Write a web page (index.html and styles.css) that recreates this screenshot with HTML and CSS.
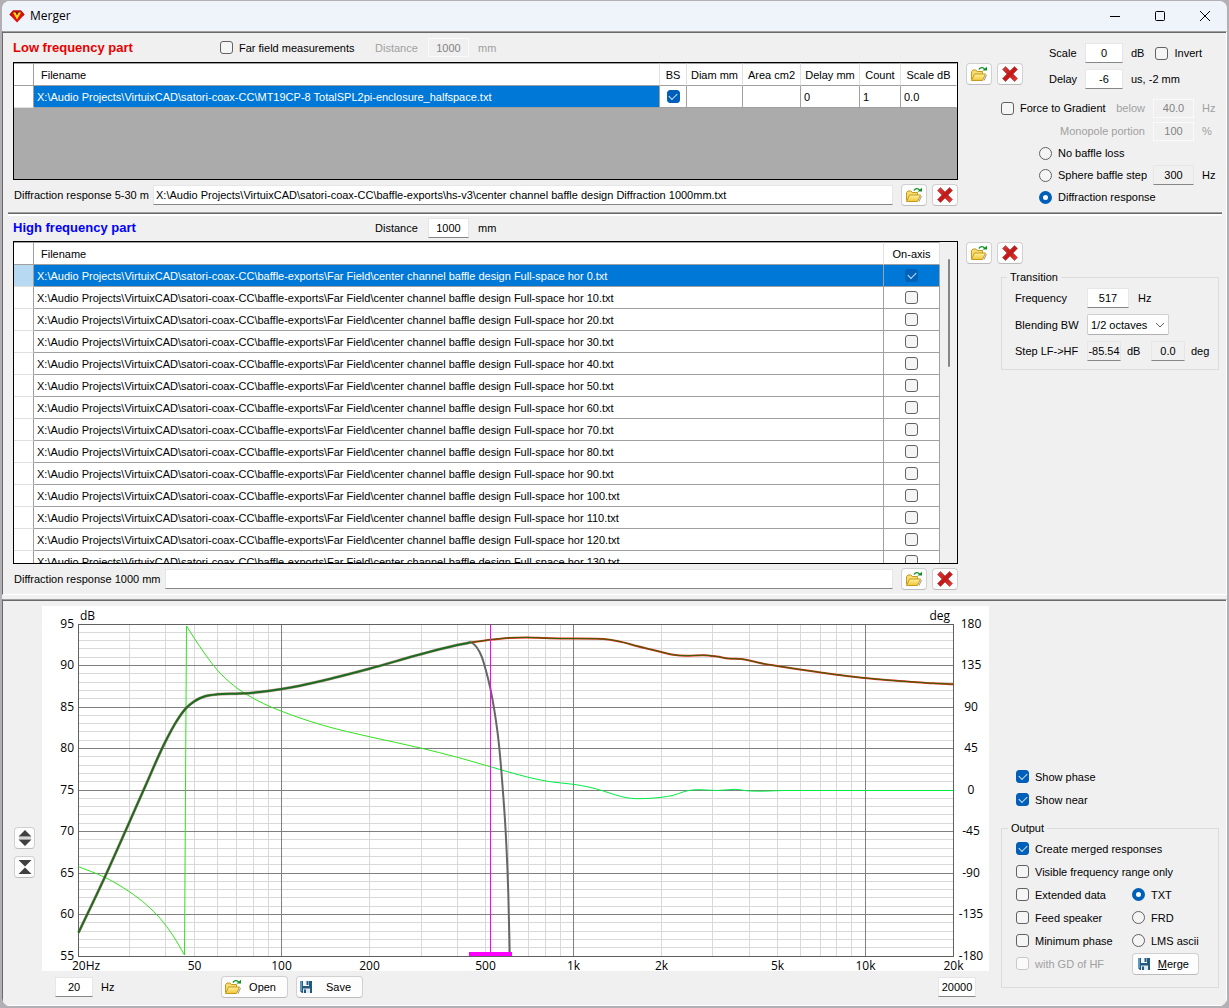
FILE: index.html
```html
<!DOCTYPE html>
<html lang="en">
<head>
<meta charset="utf-8">
<title>Merger</title>
<link rel="stylesheet" href="styles.css">
</head>
<body>
<svg width="0" height="0" class="defs" aria-hidden="true">
  <defs>
    <linearGradient id="gold" x1="0" y1="0" x2="0" y2="1"><stop offset="0" stop-color="#fff3a0"/><stop offset="1" stop-color="#f0c436"/></linearGradient>
    <linearGradient id="crimson" x1="0" y1="0" x2="1" y2="1"><stop offset="0" stop-color="#d8463e"/><stop offset=".5" stop-color="#c01818"/><stop offset="1" stop-color="#ec4038"/></linearGradient>
  </defs>
  <symbol id="i-folder" viewBox="0 0 18 16">
    <path d="M1.500 13.500V5.500L3 4h3l1.200 1.500H12.500V8" fill="#f6dc70" stroke="#c79a1c"/>
    <path d="M1.500 14.500L4.500 8H15.500L12.500 14.500Z" fill="url(#gold)" stroke="#c79a1c" stroke-linejoin="round"/>
    <path d="M14 14.500L16.500 9" stroke="#9a9a9a" fill="none"/>
    <path d="M9 3.500C10 1.300 13 1 14.500 3" fill="none" stroke="#0d9020" stroke-width="1.400"/>
    <path d="M12.500 4.500H17V.8Z" fill="#0d9020"/>
  </symbol>
  <symbol id="i-delete" viewBox="0 0 16 16">
    <path d="M3.500.5L8 5 12.500.5 15.500 3.500 11 8 15.500 12.500 12.500 15.500 8 11 3.500 15.500.5 12.500 5 8 .5 3.500Z" fill="url(#crimson)" stroke="#b03030" stroke-width=".6" stroke-linejoin="round"/>
  </symbol>
  <symbol id="i-save" viewBox="0 0 14 14">
    <path d="M1 1H13V13H3L1 11Z" fill="#24587c"/>
    <path d="M1 1H3V11H1Z" fill="#5f98bd"/>
    <path d="M4 1H10V6H4Z" fill="#f4f8fb"/>
    <path d="M7.500 1H9.500V5H7.500Z" fill="#24587c"/>
    <path d="M4 8.500H11V13H4Z" fill="#dfe9f0"/>
    <path d="M5 9.500H7V13H5Z" fill="#24587c"/>
  </symbol>
</svg>

<div class="window">
  <header class="titlebar">
    <svg class="gem" viewBox="0 0 16 13" width="16" height="13" aria-hidden="true">
      <path d="M4 .5H12L15.500 4.500 8 12.500.5 4.500Z" fill="#e01008"/>
      <path d="M4 .5H12L15.500 4.500 14 6 11.500 2.500H4.500L2 6 .5 4.500Z" fill="#b8150c"/>
      <path d="M4 2.500H6.500L8 5.500 9.500 2.500H12L8 9.500Z" fill="#ffe21a"/>
      <path d="M6.500 2H9.500L8 5Z" fill="#7c1208"/>
    </svg>
    <h1>Merger</h1>
    <div class="caption">
      <button aria-label="Minimize"><svg viewBox="0 0 12 12"><path d="M1 6.500H11"/></svg></button>
      <button aria-label="Maximize"><svg viewBox="0 0 12 12"><rect x="1.500" y="1.500" width="9" height="9" rx="1"/></svg></button>
      <button aria-label="Close"><svg viewBox="0 0 12 12"><path d="M1 1L11 11M11 1L1 11"/></svg></button>
    </div>
  </header>

  <main class="panel sources">
    <section class="part part-low">
      <div class="files">
        <div class="part-head">
          <h2 class="low">Low frequency part</h2>
          <label class="opt"><input type="checkbox">Far field measurements</label>
          <div class="distance off"><label for="dist-lf">Distance</label><input class="num" id="dist-lf" value="1000" disabled><span>mm</span></div>
        </div>
        <div class="grid-box">
          <table class="grid grid-lf">
            <colgroup><col class="c-row"><col><col class="c-bs"><col class="c-diam"><col class="c-area"><col class="c-delay"><col class="c-count"><col class="c-scale"></colgroup>
            <thead><tr><th></th><th class="name">Filename</th><th>BS</th><th>Diam mm</th><th>Area cm2</th><th>Delay mm</th><th>Count</th><th>Scale dB</th></tr></thead>
            <tbody><tr><td></td><td class="sel">X:\Audio Projects\VirtuixCAD\satori-coax-CC\MT19CP-8 TotalSPL2pi-enclosure_halfspace.txt</td><td class="tick"><input type="checkbox" aria-label="BS" checked></td><td></td><td></td><td>0</td><td>1</td><td>0.0</td></tr></tbody>
          </table>
        </div>
        <div class="path-row">
          <label class="path-lf" for="diff-lf">Diffraction response 5-30 m</label>
          <input class="path" id="diff-lf" value="X:\Audio Projects\VirtuixCAD\satori-coax-CC\baffle-exports\hs-v3\center channel baffle design Diffraction 1000mm.txt">
          <div class="file-buttons">
            <button class="btn icon" aria-label="Open"><svg width="18" height="16"><use href="#i-folder"/></svg></button>
            <button class="btn icon" aria-label="Remove"><svg width="16" height="16"><use href="#i-delete"/></svg></button>
          </div>
        </div>
      </div>
      <div class="settings">
        <div class="adjust">
          <div class="file-buttons">
            <button class="btn icon" aria-label="Open"><svg width="18" height="16"><use href="#i-folder"/></svg></button>
            <button class="btn icon" aria-label="Remove"><svg width="16" height="16"><use href="#i-delete"/></svg></button>
          </div>
          <div class="scale-grid">
            <label for="scale">Scale</label><input class="num" id="scale" value="0"><div class="unit">dB <label class="opt"><input type="checkbox">Invert</label></div>
            <label for="delay">Delay</label><input class="num" id="delay" value="-6"><div class="unit">us, -2 mm</div>
          </div>
        </div>
        <div class="loss-grid">
          <div class="gradient"><label class="opt"><input type="checkbox">Force to Gradient</label><label class="off" for="below">below</label></div>
          <input class="num" id="below" value="40.0" disabled><span class="off">Hz</span>
          <label class="off end" for="mono">Monopole portion</label><input class="num" id="mono" value="100" disabled><span class="off">%</span>
          <label class="opt loss"><input type="radio" name="loss">No baffle loss</label>
          <label class="opt step"><input type="radio" name="loss">Sphere baffle step</label><input class="num ro" aria-label="Sphere baffle step frequency" value="300"><span>Hz</span>
          <label class="opt loss"><input type="radio" name="loss" checked>Diffraction response</label>
        </div>
      </div>
    </section>

    <hr class="rule">

    <section class="part part-high">
      <div class="files">
        <div class="part-head">
          <h2 class="high">High frequency part</h2>
          <div class="distance"><label for="dist-hf">Distance</label><input class="num" id="dist-hf" value="1000"><span>mm</span></div>
        </div>
        <div class="grid-box tall">
          <table class="grid grid-hf">
            <colgroup><col class="c-row"><col><col class="c-axis"></colgroup>
            <thead><tr><th></th><th class="name">Filename</th><th>On-axis</th></tr></thead>
            <tbody>
              <tr class="current"><td></td><td>X:\Audio Projects\VirtuixCAD\satori-coax-CC\baffle-exports\Far Field\center channel baffle design Full-space hor 0.txt</td><td class="tick"><input type="checkbox" aria-label="On-axis" checked></td></tr>
              <tr><td></td><td>X:\Audio Projects\VirtuixCAD\satori-coax-CC\baffle-exports\Far Field\center channel baffle design Full-space hor 10.txt</td><td class="tick"><input type="checkbox" aria-label="On-axis"></td></tr>
              <tr><td></td><td>X:\Audio Projects\VirtuixCAD\satori-coax-CC\baffle-exports\Far Field\center channel baffle design Full-space hor 20.txt</td><td class="tick"><input type="checkbox" aria-label="On-axis"></td></tr>
              <tr><td></td><td>X:\Audio Projects\VirtuixCAD\satori-coax-CC\baffle-exports\Far Field\center channel baffle design Full-space hor 30.txt</td><td class="tick"><input type="checkbox" aria-label="On-axis"></td></tr>
              <tr><td></td><td>X:\Audio Projects\VirtuixCAD\satori-coax-CC\baffle-exports\Far Field\center channel baffle design Full-space hor 40.txt</td><td class="tick"><input type="checkbox" aria-label="On-axis"></td></tr>
              <tr><td></td><td>X:\Audio Projects\VirtuixCAD\satori-coax-CC\baffle-exports\Far Field\center channel baffle design Full-space hor 50.txt</td><td class="tick"><input type="checkbox" aria-label="On-axis"></td></tr>
              <tr><td></td><td>X:\Audio Projects\VirtuixCAD\satori-coax-CC\baffle-exports\Far Field\center channel baffle design Full-space hor 60.txt</td><td class="tick"><input type="checkbox" aria-label="On-axis"></td></tr>
              <tr><td></td><td>X:\Audio Projects\VirtuixCAD\satori-coax-CC\baffle-exports\Far Field\center channel baffle design Full-space hor 70.txt</td><td class="tick"><input type="checkbox" aria-label="On-axis"></td></tr>
              <tr><td></td><td>X:\Audio Projects\VirtuixCAD\satori-coax-CC\baffle-exports\Far Field\center channel baffle design Full-space hor 80.txt</td><td class="tick"><input type="checkbox" aria-label="On-axis"></td></tr>
              <tr><td></td><td>X:\Audio Projects\VirtuixCAD\satori-coax-CC\baffle-exports\Far Field\center channel baffle design Full-space hor 90.txt</td><td class="tick"><input type="checkbox" aria-label="On-axis"></td></tr>
              <tr><td></td><td>X:\Audio Projects\VirtuixCAD\satori-coax-CC\baffle-exports\Far Field\center channel baffle design Full-space hor 100.txt</td><td class="tick"><input type="checkbox" aria-label="On-axis"></td></tr>
              <tr><td></td><td>X:\Audio Projects\VirtuixCAD\satori-coax-CC\baffle-exports\Far Field\center channel baffle design Full-space hor 110.txt</td><td class="tick"><input type="checkbox" aria-label="On-axis"></td></tr>
              <tr><td></td><td>X:\Audio Projects\VirtuixCAD\satori-coax-CC\baffle-exports\Far Field\center channel baffle design Full-space hor 120.txt</td><td class="tick"><input type="checkbox" aria-label="On-axis"></td></tr>
              <tr><td></td><td>X:\Audio Projects\VirtuixCAD\satori-coax-CC\baffle-exports\Far Field\center channel baffle design Full-space hor 130.txt</td><td class="tick"><input type="checkbox" aria-label="On-axis"></td></tr>
            </tbody>
          </table>
          <div class="scrollbar"><div class="thumb"></div></div>
        </div>
        <div class="path-row">
          <label class="path-hf" for="diff-hf">Diffraction response 1000 mm</label>
          <input class="path" id="diff-hf" value="">
          <div class="file-buttons">
            <button class="btn icon" aria-label="Open"><svg width="18" height="16"><use href="#i-folder"/></svg></button>
            <button class="btn icon" aria-label="Remove"><svg width="16" height="16"><use href="#i-delete"/></svg></button>
          </div>
        </div>
      </div>
      <div class="settings">
        <div class="file-buttons hf-buttons">
          <button class="btn icon" aria-label="Open"><svg width="18" height="16"><use href="#i-folder"/></svg></button>
          <button class="btn icon" aria-label="Remove"><svg width="16" height="16"><use href="#i-delete"/></svg></button>
        </div>
        <fieldset class="transition">
          <legend>Transition</legend>
          <div class="row"><label for="freq">Frequency</label><input class="num wide" id="freq" value="517"><span>Hz</span></div>
          <div class="row"><label for="bw">Blending BW</label>
            <div class="combo"><select id="bw"><option>1/2 octaves</option><option>1 octave</option></select><svg viewBox="0 0 10 6" width="10" height="6" aria-hidden="true"><path d="M1 1L5 5 9 1"/></svg></div></div>
          <div class="row"><label for="step-db">Step LF-&gt;HF</label><input class="num ro tight" id="step-db" value="-85.54"><span class="db">dB</span><input class="num ro tight" aria-label="Phase step" value="0.0"><span>deg</span></div>
        </fieldset>
      </div>
    </section>
  </main>

  <section class="panel result">
    <div class="zoomers">
      <button class="btn square" aria-label="Expand range"><svg viewBox="0 0 14 16" width="14" height="16"><path d="M7 0L13.500 6.500H.5ZM.5 9.500H13.500L7 16Z"/><path class="faint" d="M1 8H13"/></svg></button>
      <button class="btn square" aria-label="Compress range"><svg viewBox="0 0 14 16" width="14" height="16"><path d="M.5 1H13.500L7 7.500ZM7 8.500L13.500 15H.5Z"/></svg></button>
    </div>
    <div class="plot">
      <svg id="chart" viewBox="0 0 947 365" role="img" aria-label="Frequency response"></svg>
      <div class="plot-tools">
        <div class="low-limit"><input class="num" id="fmin" value="20"><label for="fmin">Hz</label></div>
        <button class="btn"><svg width="18" height="16"><use href="#i-folder"/></svg><span>Open</span></button>
        <button class="btn"><svg width="14" height="14"><use href="#i-save"/></svg><span>Save</span></button>
        <input class="num high-limit" aria-label="Upper frequency" value="20000">
      </div>
    </div>
    <div class="output-side">
      <label class="opt"><input type="checkbox" checked>Show phase</label>
      <label class="opt"><input type="checkbox" checked>Show near</label>
      <fieldset class="output">
        <legend>Output</legend>
        <label class="opt span"><input type="checkbox" checked>Create merged responses</label>
        <label class="opt span"><input type="checkbox">Visible frequency range only</label>
        <label class="opt"><input type="checkbox">Extended data</label><label class="opt"><input type="radio" name="fmt" checked>TXT</label>
        <label class="opt"><input type="checkbox">Feed speaker</label><label class="opt"><input type="radio" name="fmt">FRD</label>
        <label class="opt"><input type="checkbox">Minimum phase</label><label class="opt"><input type="radio" name="fmt">LMS ascii</label>
        <label class="opt off"><input type="checkbox" disabled>with GD of HF</label><button class="btn merge"><svg width="14" height="14"><use href="#i-save"/></svg><span><u>M</u>erge</span></button>
      </fieldset>
    </div>
  </section>
</div>
<script src="chart.js"></script>
</body>
</html>
```
FILE: styles.css
```css
* { box-sizing: border-box; }
body {
  margin: 0;
  padding: 1px 2px 2px;
  min-height: 100vh;
  display: flex;
  background: #b2b0b4;
  color: #000;
  font: 11px/14px "Liberation Sans", Arial, sans-serif;
}
input, select, button { font: inherit; color: inherit; margin: 0; }
label, span { white-space: nowrap; }
.defs { position: absolute; }

.window {
  flex: 1;
  min-width: 0;
  display: flex;
  flex-direction: column;
  background: #f0f0f0;
  border-radius: 8px;
  overflow: hidden;
}

/* Title bar */
.titlebar {
  height: 30px;
  flex: none;
  display: flex;
  align-items: center;
  gap: 5px;
  padding-left: 7px;
  background: #eff3fa;
}
.titlebar h1 { margin: 0; font: 12px/16px "Open Sans", "Segoe UI", sans-serif; }
.caption { margin-left: auto; display: flex; }
.caption button {
  width: 45px; height: 30px; padding: 0; border: 0; background: none;
  display: flex; align-items: center; justify-content: center;
}
.caption svg { width: 12px; height: 12px; fill: none; stroke: #000; }

/* Sunken panels */
.panel {
  border: 1px solid;
  border-color: #a0a0a0 #fff #fff #696969;
  box-shadow: inset 0 1px #696969;
}
.sources { padding: 1px 4px 4px 10px; margin-bottom: 4px; }
.part { display: grid; grid-template-columns: minmax(0, 1fr) 256px; column-gap: 8px; }
.part-low { padding-bottom: 4px; }
.rule {
  margin: 0 0 0 -5px;
  height: 4px;
  border: solid;
  border-width: 1px 0 2px;
  border-color: #a0a0a0 transparent #fff;
  background: #696969;
}

.part-head { display: grid; grid-template-columns: 207px 155px auto; align-items: center; height: 29px; }
.part-high .part-head { height: 25px; padding-bottom: 2px; }
.part-head h2 { margin: 0; font-size: 13px; line-height: 16px; font-weight: bold; }
h2.low { color: #e80000; }
h2.high { color: #00f; }
.distance { grid-column: 3; display: flex; align-items: center; }
.distance label { width: 53px; }
.distance .num { width: 41px; margin-right: 9px; }
.off { color: #a0a0a0; }

/* Controls */
.opt { display: flex; align-items: center; gap: 6px; }
input[type="checkbox"], input[type="radio"] {
  appearance: none;
  flex: none;
  width: 13px;
  height: 13px;
  border: 1px solid #626262;
  border-radius: 3px;
  background: #f5f5f5;
}
input[type="radio"] { border-radius: 50%; }
input[type="checkbox"]:checked { border-color: #005fb8; background: #005fb8; display: grid; place-items: center; }
input[type="checkbox"]:checked::before {
  content: "";
  width: 7px;
  height: 4px;
  margin-bottom: 2px;
  border: solid #cfe3f5;
  border-width: 0 0 1px 1px;
  transform: rotate(-45deg);
}
input[type="radio"]:checked { border: 4px solid #005fb8; background: #fff; }
input:disabled[type="checkbox"] { border-color: #c8c8c8; background: #fafafa; }

.num, .path {
  height: 20px;
  padding: 0 2px;
  border: 1px solid #e6e6e6;
  border-bottom-color: #868686;
  border-radius: 0;
  background: #fff;
}
.num { width: 38px; text-align: center; }
.num.ro { background: #f0f0f0; }
.num:disabled { height: 19px; border-color: #fafafa; background: #f0f0f0; color: #838383; }
.btn {
  height: 22px;
  padding: 0;
  display: flex;
  align-items: center;
  justify-content: center;
  border: 1px solid #d0d0d0;
  border-bottom-color: #bcbcbc;
  border-radius: 4px;
  background: #fdfdfd;
}
.btn.icon { width: 26px; }
.btn.square { width: 21px; }
.file-buttons { display: flex; gap: 5px; }

/* File grids */
.grid-box { height: 118px; border: 1px solid #000; background: #ababab; display: flex; align-items: flex-start; overflow: hidden; }
.grid-box.tall { height: 323px; background: #fff; }
.grid { flex: 1; min-width: 0; width: 100%; table-layout: fixed; border-collapse: separate; border-spacing: 0; background: #fff; }
.grid th, .grid td {
  height: 22px;
  padding: 0 3px;
  border: solid #a0a0a0;
  border-width: 0 1px 1px 0;
  font-weight: normal;
  text-align: left;
  white-space: nowrap;
  overflow: hidden;
}
.grid th { height: 23px; padding: 0 2px; border-top-width: 1px; border-right-color: #e0e0e0; text-align: center; }
.grid th:first-child { border-right-color: #a0a0a0; }
.grid td:first-child { border-bottom-color: #e0e0e0; }
.grid th.name { padding-left: 7px; text-align: left; }
.grid-lf th:last-child, .grid-lf td:last-child { border-right-color: #fff; }
.grid .sel, .grid .current td { background: #0078d7; color: #fff; }
.grid .current td:first-child { background: #b8d9f2; }
.grid .current input:checked { background: #0063b8; }
.grid .tick { padding: 0; }
.grid .tick input { margin: 0 auto; display: grid; }
.c-row { width: 20px; }
.c-bs { width: 27px; }
.c-diam, .c-scale { width: 56px; }
.c-area { width: 58px; }
.c-delay { width: 59px; }
.c-count { width: 41px; }
.c-axis { width: 56px; }
.scrollbar { align-self: stretch; width: 17px; padding: 17px 0 0 8px; background: #f0f0f0; }
.thumb { width: 2px; height: 108px; border-radius: 1px; background: #868686; }

.path-row { display: flex; align-items: center; height: 22px; margin-top: 4px; }
.path-lf { width: 140px; padding-left: 1px; }
.path-hf { width: 152px; padding-left: 1px; }
.path { flex: 1; min-width: 0; margin-right: 8px; }

/* Right-hand settings */
.adjust { display: flex; gap: 26px; }
.adjust .file-buttons { padding-top: 30px; }
.scale-grid { display: grid; grid-template-columns: 28px 38px auto; column-gap: 8px; row-gap: 6px; padding-top: 10px; align-items: center; }
.unit { display: flex; gap: 11px; white-space: nowrap; }
.loss-grid {
  display: grid;
  grid-template-columns: 144px 41px auto;
  grid-template-rows: 24px;
  grid-auto-rows: 22px;
  column-gap: 8px;
  align-items: center;
  margin: 7px 0 0 35px;
}
.loss-grid .num { width: 41px; }
.gradient { display: flex; justify-content: space-between; }
.end { text-align: right; }
.loss-grid .loss { grid-column: 1 / -1; }
.loss, .step { padding-left: 38px; }

.hf-buttons { padding-top: 26px; }
fieldset { margin: 0; min-width: 0; border: 1px solid #dcdcdc; }
legend { padding: 0 3px; margin: 0; }
.transition { margin: 6px 3px 0 35px; padding: 4px 0 8px 13px; display: flex; flex-direction: column; gap: 6px; }
.transition legend, .output legend { margin-left: -8px; }
.row { display: flex; align-items: center; gap: 6px; }
.row > label { width: 66px; }
.num.wide { width: 42px; margin-right: 3px; }
.num.tight { width: 34px; padding: 0; }
.db { width: 18px; }
.combo { position: relative; }
.combo select {
  appearance: none;
  width: 82px;
  height: 21px;
  padding: 0 3px;
  border: 1px solid #cfcfcf;
  border-bottom-color: #b0b0b0;
  border-radius: 2px;
  background: #fdfdfd;
}
.combo svg { position: absolute; right: 4px; top: 8px; fill: none; stroke: #606060; pointer-events: none; }

/* Result panel */
.result {
  flex: 1;
  display: grid;
  grid-template-columns: 21px minmax(0, 1fr) 218px;
  padding: 6px 7px 7px 11px;
}
.zoomers { display: flex; flex-direction: column; gap: 7px; padding-top: 221px; }
.zoomers svg { fill: #404040; }
.zoomers .faint { stroke: #b0b0b0; }
.plot { margin: 0 12px 0 7px; }
#chart { display: block; width: 100%; overflow: visible; background: #fff; font: 12px "Open Sans", "Segoe UI", sans-serif; }
.plot-tools { display: flex; align-items: center; gap: 8px; margin-top: 5px; padding: 0 13px; }
.plot-tools .btn { width: 67px; padding: 0 11px 0 2px; justify-content: space-between; }
.low-limit { display: flex; align-items: center; gap: 8px; width: 158px; }
.high-limit { margin-left: auto; }
.output-side { display: flex; flex-direction: column; justify-content: flex-end; padding-bottom: 10px; }
.output-side > .opt { height: 23px; padding-left: 15px; }
.output {
  margin-top: 10px;
  padding: 2px 0 12px 14px;
  display: grid;
  grid-template-columns: 116px auto;
  grid-auto-rows: 23px;
  align-items: center;
}
.output .span { grid-column: 1 / -1; }
.merge { width: 67px; padding: 0 9px 0 4px; justify-content: space-between; align-self: end; }

/* Chart */
.minor { stroke: #d9d9d9; }
.major { stroke: #808080; }
.frame { stroke: #606060; fill: none; }
.minor, .major, .frame { shape-rendering: crispEdges; }
.curve { fill: none; stroke-linejoin: round; }
.phase { stroke: #30e31c; }
.phase-hf { stroke: #00ec44; }
.merged { stroke: #e83020; stroke-width: 2; }
.near { stroke: #666; stroke-width: 2; }
.far { stroke: #2c6400; stroke-width: 1; }
.near-sum { stroke: #a06058; stroke-width: 3; stroke-opacity: .6; }
.near-core { stroke: #1c6c20; stroke-width: 2; }
.cursor { stroke: #f0f; }
.band { fill: #f0f; }
```
FILE: chart.js
```js
// Frequency response chart: 20 Hz - 20 kHz, 55 - 95 dB, phase on the right axis.
const svg = document.getElementById('chart');
const L = 36, R = 911, T = 18, B = 350;
const parts = [];

const xOf = f => Math.floor(L + (R - L) / 3 * Math.log10(f / 20)) + 0.5;
const yOf = n => Math.floor(T + n * 8.3) + 0.5;

// Minor lines first so that the major ones stay on top.
let minor = '', major = '';
for (const decade of [10, 100, 1000, 10000]) {
  for (let m = 1; m < 10; m++) {
    const f = decade * m;
    if (f <= 20 || f >= 20000) continue;
    const line = `M${xOf(f)} ${T}V${B}`;
    if (m === 1) major += line; else minor += line;
  }
}
for (let n = 1; n < 40; n++) {
  const line = `M${L} ${yOf(n)}H${R}`;
  if (n % 5 === 0) major += line; else minor += line;
}
parts.push(`<path class="minor" d="${minor}"/><path class="major" d="${major}"/>`);
parts.push(`<rect class="frame" x="${L + 0.5}" y="${T + 0.5}" width="${R - L}" height="${B - T}"/>`);

// Monotone cubic interpolation through the points.
function curve(p, cls) {
  const n = p.length;
  const s = [];
  for (let i = 0; i < n - 1; i++) s.push((p[i + 1][1] - p[i][1]) / (p[i + 1][0] - p[i][0]));
  const m = p.map((_, i) => {
    if (i === 0) return s[0];
    if (i === n - 1) return s[n - 2];
    if (s[i - 1] * s[i] <= 0) return 0;
    const h0 = p[i][0] - p[i - 1][0], h1 = p[i + 1][0] - p[i][0];
    const mid = (s[i - 1] * h1 + s[i] * h0) / (h0 + h1);
    return Math.sign(mid) * Math.min(Math.abs(mid), 3 * Math.abs(s[i - 1]), 3 * Math.abs(s[i]));
  });
  let d = `M${p[0]}`;
  for (let i = 0; i < n - 1; i++) {
    const h = (p[i + 1][0] - p[i][0]) / 3;
    d += `C${p[i][0] + h},${p[i][1] + m[i] * h} ${p[i + 1][0] - h},${p[i + 1][1] - m[i + 1] * h} ${p[i + 1]}`;
  }
  parts.push(`<path class="curve ${cls}" d="${d}"/>`);
}

const splLow = [[36.5,326.7],[62.7,271.3],[87.3,216.3],[102.7,181.5],[123.7,135],[134.7,115],[144,102.3],[152.3,95.3],[163,90.3],[175.3,88.3],[198,87.6],[218,86],[239.7,83],[258,79.7],[291.3,72],[327.3,62.7],[379.7,48],[415.3,39],[429.7,36.3]];
const splHigh = [[429.7,36.3],[448.3,33.7],[466.3,31.9],[484.7,31.4],[503,32.1],[518,32.5],[554.7,32.7],[568,33.7],[581.3,36.4],[594.7,40],[608,43.3],[619.3,46],[631.3,48.8],[644.7,49.7],[661.3,49.2],[674.7,50.5],[686.3,52.5],[699.7,53.1],[707.3,54.5],[718,57],[735.3,60],[758,63.5],[778.3,66.4],[794.7,68.7],[809.3,70.6],[823.3,72],[848,74.3],[871.3,76],[891.3,77.3],[911.5,78.2]];
const nearDrop = [[429.7,36.3],[434.7,41.3],[439.7,50.7],[443.3,62.3],[448.3,82.3],[452.3,104],[457,139],[460.7,182.3],[464,232],[466.3,287.3],[467.7,347]];
const wrapLow = [[36.5,260.7],[62.7,271.3],[87.3,285.7],[104.7,299],[118,312.3],[131.3,330],[142.5,349]];
const phaseLow = [[144.5,20],[152.3,32.3],[163,48],[175.3,64],[191.3,79.2],[204.7,88.5],[221.3,97.5],[239.7,105.3],[258,112],[281.3,119.4],[304.7,125.5],[327.3,130.7],[379.7,142.3],[415.3,151.3],[448.3,160.7]];
const phaseHigh = [[448.3,160.7],[466.3,165.9],[488,171.7],[508,175.7],[531.3,178.3],[548,181.3],[561.3,185],[574.7,189.3],[584.7,191.7],[594.7,192.7],[608,192.3],[619.3,191.3],[631.3,189.3],[641.3,185.9],[648,184.3],[658,183.7],[674.7,184.5],[693,183.3],[706.3,184.9],[721.3,185.2],[741,184.5],[911.5,184.5]];

curve(wrapLow, 'phase');
curve([[142.5,349],[144.5,20]], 'phase');
curve(phaseLow, 'phase');
curve(phaseHigh, 'phase-hf');
curve(nearDrop, 'near');
curve(splLow, 'near-sum');
curve(splLow, 'near-core');
curve(splHigh, 'merged');
curve(splHigh, 'far');

parts.push('<path class="cursor" d="M448.5 19V350"/><rect class="band" x="427" y="346" width="43" height="4"/>');

// Axis captions
const text = (x, y, s, anchor) => parts.push(`<text x="${x}" y="${y}" text-anchor="${anchor || 'middle'}">${s}</text>`);
for (let i = 0; i <= 8; i++) {
  const y = Math.floor(T + i * 41.5) + 4;
  text(32, y, 95 - i * 5, 'end');
  text(929, y, 180 - i * 45);
}
text(38, 14, 'dB', 'start');
text(908, 14, 'deg', 'end');
text(30, 364, '20Hz', 'start');
for (const [f, s] of [[50, '50'], [100, '100'], [200, '200'], [500, '500'], [1000, '1k'], [2000, '2k'], [5000, '5k'], [10000, '10k'], [20000, '20k']]) {
  text(xOf(f), 364, s);
}

svg.innerHTML = parts.join('');
```
